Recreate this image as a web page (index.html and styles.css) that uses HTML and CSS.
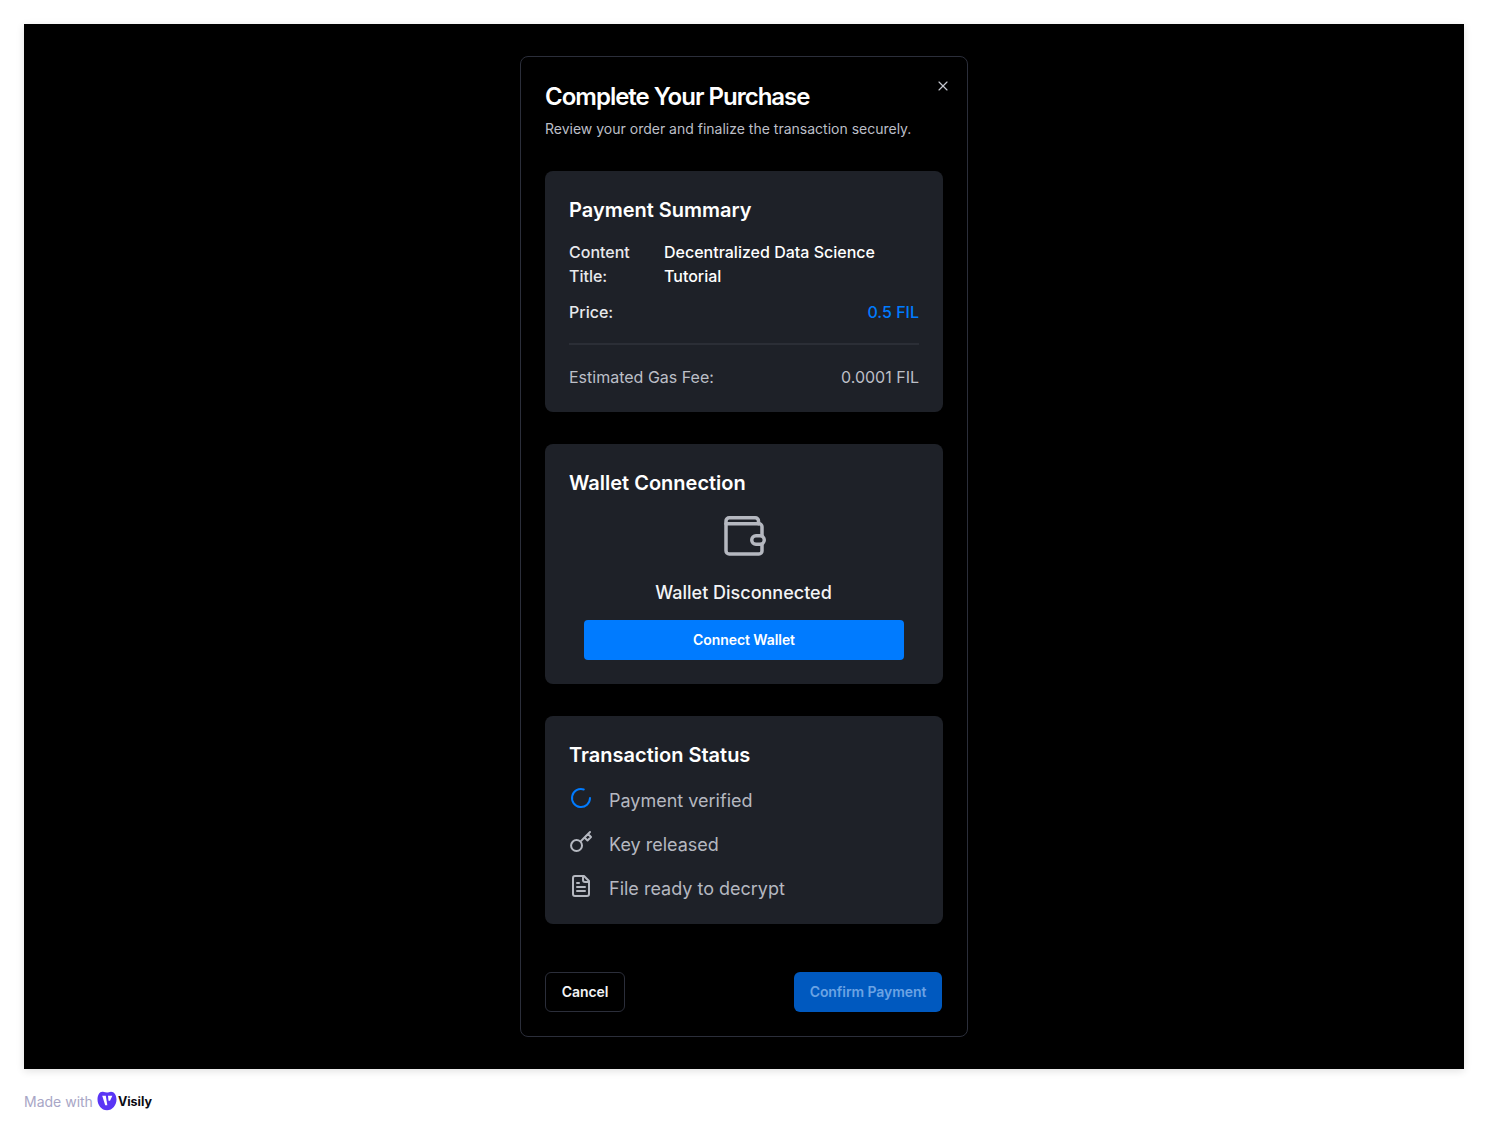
FILE: index.html
```html
<!DOCTYPE html>
<html lang="en">
<head>
  <meta charset="UTF-8" />
  <title>Complete Your Purchase</title>
  <link rel="stylesheet" href="styles.css">
</head>
<body>
  <div class="frame">
    <div class="dialog">
      <button class="close" aria-label="Close">
        <svg width="16" height="16" viewBox="0 0 24 24" fill="none" stroke="currentColor" stroke-width="1.750" stroke-linecap="round" stroke-linejoin="round"><path d="M18 6 6 18"/><path d="m6 6 12 12"/></svg>
      </button>
      <div class="dialog-head">
        <h1>Complete Your Purchase</h1>
        <p>Review your order and finalize the transaction securely.</p>
      </div>

      <section class="card">
        <h2>Payment Summary</h2>
        <div class="summary-row first">
          <span class="label">Content Title:</span>
          <span class="value">Decentralized Data Science Tutorial</span>
        </div>
        <div class="price-row">
          <span>Price:</span>
          <span class="price">0.5 FIL</span>
        </div>
        <div class="divider"></div>
        <div class="gas-row">
          <span>Estimated Gas Fee:</span>
          <span>0.0001 FIL</span>
        </div>
      </section>

      <section class="card">
        <h2>Wallet Connection</h2>
        <div class="wallet">
          <svg class="wallet-icon" width="48" height="48" viewBox="0 0 48 48" fill="none" stroke="currentColor" stroke-width="3.500" stroke-linecap="round" stroke-linejoin="round">
            <path d="M42 24V14.750a3 3 0 0 0-3-3H6"/>
            <path d="M38.500 11.750V9a3.250 3.250 0 0 0-3.250-3.250h-26A3.250 3.250 0 0 0 6 9v29.750A3.250 3.250 0 0 0 9.250 42H39a3 3 0 0 0 3-3v-7"/>
            <rect x="31.750" y="23.750" width="12.500" height="8.500" rx="4.250"/>
          </svg>
          <div class="wallet-state">Wallet Disconnected</div>
          <button class="btn-connect">Connect Wallet</button>
        </div>
      </section>

      <section class="card">
        <h2>Transaction Status</h2>
        <ul class="steps">
          <li>
            <svg class="spin" width="24" height="24" viewBox="0 0 24 24" fill="none" stroke="currentColor" stroke-width="2" stroke-linecap="round" stroke-linejoin="round"><path d="M21 12a9 9 0 1 1-6.219-8.560"/></svg>
            <span>Payment verified</span>
          </li>
          <li>
            <svg width="24" height="24" viewBox="0 0 24 24" fill="none" stroke="currentColor" stroke-width="2" stroke-linecap="round" stroke-linejoin="round"><path d="M21 2l-2 2m-7.610 7.610a5.500 5.500 0 1 1-7.778 7.778 5.500 5.500 0 0 1 7.777-7.777zm0 0L15.500 7.500m0 0l3 3L22 7l-3-3m-3.500 3.500L19 4"/></svg>
            <span>Key released</span>
          </li>
          <li>
            <svg width="24" height="24" viewBox="0 0 24 24" fill="none" stroke="currentColor" stroke-width="2" stroke-linecap="round" stroke-linejoin="round"><path d="M15 2H6a2 2 0 0 0-2 2v16a2 2 0 0 0 2 2h12a2 2 0 0 0 2-2V7Z"/><path d="M14 2v4a2 2 0 0 0 2 2h4"/><path d="M10 9H8"/><path d="M16 13H8"/><path d="M16 17H8"/></svg>
            <span>File ready to decrypt</span>
          </li>
        </ul>
      </section>

      <div class="actions">
        <button class="btn-cancel">Cancel</button>
        <button class="btn-confirm">Confirm Payment</button>
      </div>
    </div>
  </div>

  <footer class="made-with">
    <span>Made with</span>
    <svg width="20" height="20" viewBox="0 0 20 20"><path fill="#5a35f5" d="M6 .800c1.500.300 2.800.700 4 .700 1.300 0 2.500-.800 4-.800 3.200 0 5.500 3.300 5.500 7.800 0 5.500-4 10.800-9.500 10.800S.500 14 .500 8.500C.500 4 2.800.200 6 .800z"/><path fill="#fff" d="M5.200 4.800h3.600l1.500 9.400H8.200z"/><path fill="#fff" d="M11 4.800h4.400l-2.400 5h-1.500z"/></svg>
    <span class="brand">Visily</span>
  </footer>
</body>
</html>
```

FILE: styles.css
```css
* {
  box-sizing: border-box;
}

html, body {
  margin: 0;
  padding: 0;
  background: #fff;
  font-family: Inter, "Liberation Sans", sans-serif;
}

body {
  padding: 24px 24px 0;
}

.frame {
  height: 1045px;
  background: #000;
  padding-top: 32px;
  display: flex;
  justify-content: center;
  align-items: flex-start;
  box-shadow: 0 2px 8px rgba(0, 0, 0, 0.12);
}

.dialog {
  position: relative;
  width: 448px;
  height: 981px;
  padding: 24px;
  background: #000;
  border: 1px solid #2b2e3a;
  border-radius: 8px;
  color: #fff;
}

.close {
  position: absolute;
  top: 21px;
  right: 16px;
  width: 16px;
  height: 16px;
  padding: 0;
  border: 0;
  background: none;
  color: #c4c7cf;
  display: flex;
}

.dialog-head {
  margin-bottom: 32px;
}

h1 {
  margin: 0 0 6px;
  font-size: 24px;
  line-height: 32px;
  font-weight: 600;
  letter-spacing: -1px;
}

.dialog-head p {
  margin: 0;
  font-size: 14px;
  line-height: 20px;
  color: #bcbfc7;
}

.card {
  margin-bottom: 32px;
  padding: 24px;
  background: #1e2128;
  border-radius: 8px;
}

h2 {
  margin: 0;
  font-size: 20px;
  line-height: 30px;
  font-weight: 600;
}

.summary-row {
  display: flex;
  margin-top: 15px;
  font-size: 16px;
  line-height: 24px;
  font-weight: 500;
}

.label {
  width: 95px;
  flex: none;
  padding-right: 20px;
  color: #e8e9ec;
}

.price-row,
.gas-row {
  display: flex;
  justify-content: space-between;
  font-size: 16px;
  line-height: 24px;
}

.price-row {
  margin-top: 12px;
  font-weight: 500;
  color: #e8e9ec;
}

.price {
  color: #007bff;
}

.divider {
  height: 2px;
  margin: 19px 0 20px;
  background: #2b2e36;
}

.gas-row {
  height: 23px;
  color: #bcbfc7;
}

.wallet {
  display: flex;
  flex-direction: column;
  align-items: center;
  margin-top: 14px;
}

.wallet-icon {
  color: #b5b8c0;
}

.wallet-icon rect {
  fill: #1e2128;
}

.wallet-state {
  margin: 19px 1px 0 0;
  font-size: 18px;
  line-height: 28px;
  font-weight: 500;
  color: #f3f4f6;
}

.btn-connect {
  width: 320px;
  height: 40px;
  margin-top: 13px;
  border: 0;
  border-radius: 4px;
  background: #007bff;
  color: #fff;
  font: 600 14px/20px Inter, sans-serif;
  letter-spacing: -0.070px;
}

.steps {
  list-style: none;
  margin: 16px 0 0;
  padding: 0;
  display: flex;
  flex-direction: column;
  gap: 18px;
}

.steps li {
  display: flex;
  align-items: flex-start;
  gap: 16px;
  height: 26px;
  color: #b5b8c0;
  font-size: 18px;
  line-height: 24px;
}

.steps span {
  margin-top: 3px;
}

.spin {
  color: #007bff;
}

.actions {
  display: flex;
  justify-content: space-between;
  margin-top: 48px;
}

.btn-cancel,
.btn-confirm {
  height: 40px;
  border-radius: 6px;
  font: 600 14px/20px Inter, sans-serif;
  letter-spacing: -0.070px;
}

.btn-cancel {
  width: 80px;
  background: #000;
  border: 1px solid #2b2e3a;
  color: #f3f4f6;
}

.btn-confirm {
  width: 148px;
  margin-right: 1px;
  border: 0;
  background: #0059bf;
  color: #6ba3e4;
}

.made-with {
  display: flex;
  align-items: center;
  height: 20px;
  margin-top: 22px;
  font-size: 14px;
  color: #a8a6c6;
}

.made-with svg {
  margin-left: 4px;
}

.brand {
  margin-left: 1px;
  font-weight: 700;
  font-size: 12.500px;
  color: #0b0b12;
}
```
